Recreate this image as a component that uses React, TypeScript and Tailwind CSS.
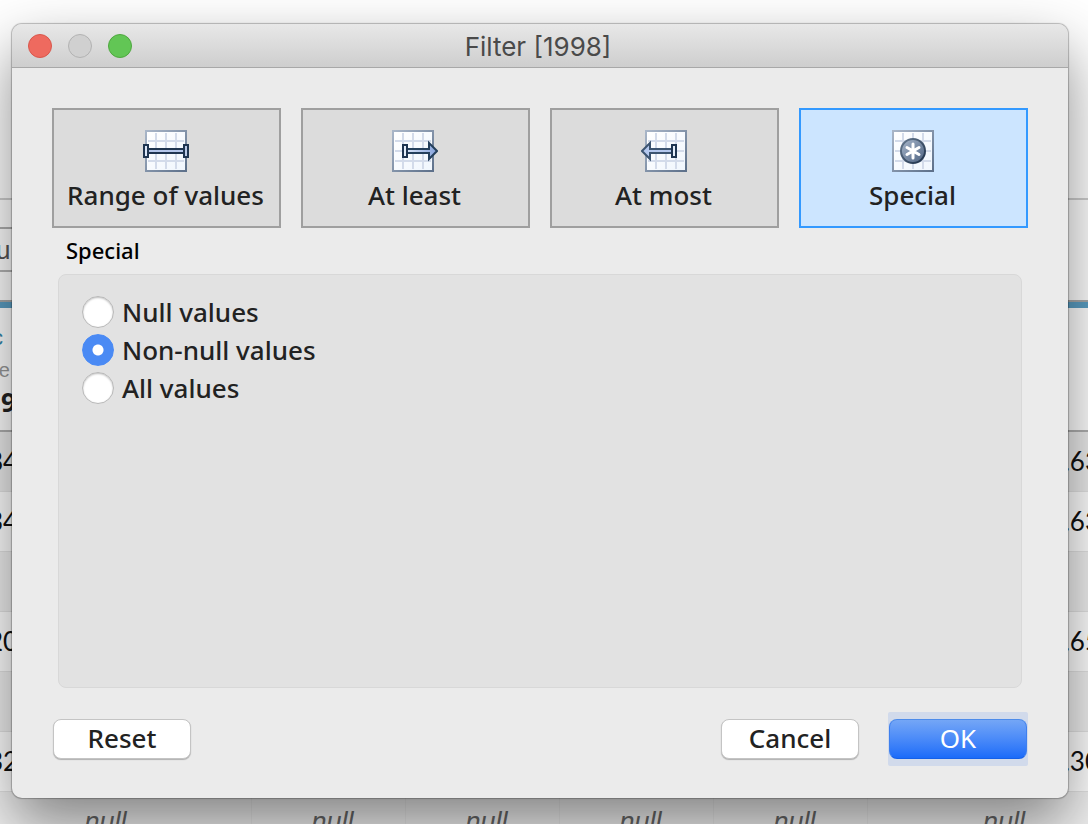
import { useState } from "react";
import type { ReactNode } from "react";

type Mode = "range" | "atLeast" | "atMost" | "special";

function GridPaper({ x, id }: { x: number; id: string }) {
  return (
    <g>
      <defs>
        <linearGradient id={`${id}-edge`} x1="0" y1="0" x2="1" y2="1">
          <stop offset="0" stopColor="#a9b6c8" />
          <stop offset="1" stopColor="#5d708a" />
        </linearGradient>
        <linearGradient id={`${id}-paper`} x1="0" y1="0" x2="1" y2="1">
          <stop offset="0" stopColor="#ffffff" />
          <stop offset="1" stopColor="#f0f6fd" />
        </linearGradient>
        <linearGradient id={`${id}-rod`} x1="0" y1="0" x2="1" y2="0">
          <stop offset="0" stopColor="#dbe6f8" />
          <stop offset="1" stopColor="#86a3dc" />
        </linearGradient>
      </defs>
      <rect x={x + 1} y="1" width="40" height="40" fill={`url(#${id}-paper)`} stroke={`url(#${id}-edge)`} strokeWidth="2" />
      <path
        d={`M${x + 11} 3V39M${x + 21} 3V39M${x + 31} 3V39M${x + 3} 11H${x + 39}M${x + 3} 21H${x + 39}M${x + 3} 31H${x + 39}`}
        stroke="#d3dbea"
        strokeWidth="2"
      />
    </g>
  );
}

function RangeIcon() {
  return (
    <svg width="46" height="42" viewBox="0 0 46 42" aria-hidden="true">
      <GridPaper x={2} id="range" />
      <rect x="5" y="18" width="36" height="6" fill="#1f3550" />
      <rect x="5" y="20" width="36" height="2" fill="#b4c6ea" />
      <rect x="1" y="15" width="4" height="12" fill="#dbe6f8" stroke="#1f3550" strokeWidth="2" />
      <rect x="41" y="15" width="4" height="12" fill="#b9c9e6" stroke="#1f3550" strokeWidth="2" />
    </svg>
  );
}

function AtLeastIcon() {
  return (
    <svg width="46" height="42" viewBox="0 0 46 42" aria-hidden="true">
      <GridPaper x={0} id="least" />
      <path d="M14 19H37V13L45 21L37 29V23H14Z" fill="url(#least-rod)" stroke="#25405c" strokeWidth="2" />
      <rect x="11" y="15" width="4" height="12" fill="#e4edf9" stroke="#1f3550" strokeWidth="2" />
    </svg>
  );
}

function AtMostIcon() {
  return (
    <svg width="46" height="42" viewBox="0 0 46 42" aria-hidden="true">
      <GridPaper x={4} id="most" />
      <path d="M32 19H9V13L1 21L9 29V23H32Z" fill="#b4c8ee" stroke="#3c5470" strokeWidth="2" />
      <rect x="31" y="15" width="4" height="12" fill="#e4edf9" stroke="#1f3550" strokeWidth="2" />
    </svg>
  );
}

function SpecialIcon() {
  return (
    <svg width="46" height="42" viewBox="0 0 46 42" aria-hidden="true">
      <GridPaper x={2} id="special" />
      <defs>
        <linearGradient id="disc" x1="0" y1="0" x2="1" y2="1">
          <stop offset="0" stopColor="#a9b8cc" />
          <stop offset="1" stopColor="#4c6180" />
        </linearGradient>
        <linearGradient id="disc-edge" x1="0" y1="0" x2="1" y2="1">
          <stop offset="0" stopColor="#66798f" />
          <stop offset="1" stopColor="#1c2f48" />
        </linearGradient>
      </defs>
      <circle cx="23" cy="21" r="12" fill="url(#disc)" stroke="url(#disc-edge)" strokeWidth="2" />
      <path d="M23 14V28M17 17.5L29 24.5M29 17.5L17 24.5" stroke="#ffffff" strokeWidth="3" strokeLinecap="round" />
    </svg>
  );
}

const modes: { id: Mode; label: string; icon: ReactNode }[] = [
  { id: "range", label: "Range of values", icon: <RangeIcon /> },
  { id: "atLeast", label: "At least", icon: <AtLeastIcon /> },
  { id: "atMost", label: "At most", icon: <AtMostIcon /> },
  { id: "special", label: "Special", icon: <SpecialIcon /> },
];

const options = ["Null values", "Non-null values", "All values"];

const rows = [
  { first: "84", last: "0.63" },
  { first: "34", last: "0.63" },
  { first: "", last: "" },
  { first: "20", last: "0.65" },
  { first: "", last: "" },
  { first: "32", last: "0.30" },
];

function DataSheet() {
  return (
    <div className="flex flex-col font-['Lato',sans-serif] text-[26px] text-[#111]">
      <div className="box-content h-[198px] border-b-2 border-[#cfcfcf]" />
      <div className="box-content h-[27px] w-[500px] border-b-2 border-[#b0b0b0]" />
      <div className="box-content flex h-[41px] w-[500px] items-center border-b-2 border-[#b5b5b5]">
        <span className="-ml-1 pt-[2px] font-['Liberation_Sans',sans-serif] text-[26px] text-[#555]">u</span>
      </div>
      <div className="h-7" />
      <div className="h-2 border-t-2 border-[#aaa] bg-[#5b9fc4]" />
      <div className="flex h-[124px] flex-col border-b-2 border-[#b0b0b0] pt-[14px]">
        <span className="-ml-2 font-['Liberation_Sans',sans-serif] text-[22px] leading-8 text-[#2f85a8]">c</span>
        <span className="-ml-2 font-['Liberation_Sans',sans-serif] text-[20px] leading-8 text-[#999]">re</span>
        <span className="ml-px font-['Noto_Sans',sans-serif] text-[26px] leading-8 font-bold text-[#222]">98</span>
      </div>
      {rows.map((row, i) => (
        <div
          key={i}
          className={`flex h-[60px] items-center justify-between border-b border-[#e4e4e4] ${
            i === 0 ? "bg-[#ececec]" : row.first === "" ? "bg-[#f0f0f0]" : "bg-white"
          }`}
        >
          <span className="-ml-3">{row.first}</span>
          <span className="-mr-3">{row.last}</span>
        </div>
      ))}
      <div className="-ml-12 flex h-[60px] w-[1200px] bg-[#f0f0f0] font-['Liberation_Sans',sans-serif] text-[27px] text-[#666] italic">
        <span className="flex w-[300px] items-center justify-center border-r border-[#e8e8e8] pl-2">null</span>
        {[0, 1, 2, 3].map((n) => (
          <span key={n} className="flex w-[154px] items-center justify-center border-r border-[#e8e8e8] pl-2">
            null
          </span>
        ))}
        <span className="flex w-[272px] items-center justify-center">null</span>
      </div>
    </div>
  );
}

export default function App() {
  const [mode, setMode] = useState<Mode>("special");
  const [choice, setChoice] = useState(1);

  return (
    <main className="relative h-screen overflow-hidden bg-white">
      <DataSheet />
      <section
        role="dialog"
        aria-labelledby="dialog-title"
        className="absolute top-6 right-5 left-3 overflow-hidden rounded-[10px] bg-[#ebebeb] font-['Noto_Sans',sans-serif] text-[26px] font-medium text-[#222] shadow-[0_0_1px_1px_rgba(0,0,0,0.25),0_26px_60px_rgba(0,0,0,0.46)]"
      >
        <header className="grid h-11 grid-cols-[1fr_auto_1fr] items-center border-b border-[#a8a8a8] bg-linear-to-b from-[#e8e8e8] to-[#cecece] px-4">
          <div className="flex gap-4">
            <button aria-label="Close" className="size-6 rounded-full border border-[#d8574c] bg-[#ee6a5f]" />
            <button aria-label="Minimize" className="size-6 rounded-full border border-[#b2b2b2] bg-[#d0d0d0]" />
            <button aria-label="Zoom" className="size-6 rounded-full border border-[#4fa73f] bg-[#62c655]" />
          </div>
          <h1 id="dialog-title" className="pt-[2px] pr-1 font-['Inter',sans-serif] text-[26px] leading-8 font-normal text-[#4a4a4a]">
            Filter [1998]
          </h1>
        </header>

        <div className="px-10 pt-10 pb-8">
          <div className="grid grid-cols-4 gap-5">
            {modes.map((m) => (
              <button
                key={m.id}
                aria-pressed={mode === m.id}
                onClick={() => setMode(m.id)}
                className={`flex h-[120px] flex-col items-center border-2 pt-5 pr-[2px] whitespace-nowrap ${
                  mode === m.id ? "border-[#3399ff] bg-[#cce5ff]" : "border-[#9f9f9f] bg-[#dcdcdc]"
                }`}
              >
                {m.icon}
                <span className="mt-1 leading-[38px]">{m.label}</span>
              </button>
            ))}
          </div>

          <fieldset>
            <legend className="px-[14px] pt-[5px] pb-[7px] text-[22px] leading-[34px] text-black">Special</legend>
            <div className="mx-[6px] flex h-[414px] flex-col gap-[6px] rounded-lg border border-[#d8d8d8] bg-[#e2e2e2] px-[23px] pt-[21px]">
              {options.map((label, i) => (
                <label key={label} className="flex h-8 items-center gap-2 self-start">
                  <input
                    type="radio"
                    name="special"
                    checked={choice === i}
                    onChange={() => setChoice(i)}
                    className="size-8 appearance-none rounded-full border border-[#b8b8b8] bg-white shadow-[inset_0_1px_2px_rgba(0,0,0,0.25)] checked:border-[#4a8af4] checked:bg-[radial-gradient(circle,#fff_5px,#4a8af4_6px)] checked:shadow-none"
                  />
                  <span>{label}</span>
                </label>
              ))}
            </div>
          </fieldset>

          <div className="mt-6 flex items-center">
            <button className="my-[7px] ml-px h-10 w-[138px] rounded-lg border border-[#c4c4c4] bg-white pb-[2px] leading-9 shadow-[0_1px_1px_rgba(0,0,0,0.25)]">
              Reset
            </button>
            <button className="mr-[29px] ml-auto h-10 w-[138px] rounded-lg border border-[#c4c4c4] bg-white pb-[2px] leading-9 shadow-[0_1px_1px_rgba(0,0,0,0.25)]">
              Cancel
            </button>
            <div className="rounded-xs bg-[#d1daeb] px-px py-[7px]">
              <button className="block h-10 w-[138px] rounded-lg border border-x-[#3f80ee] border-t-[#4c8bea] border-b-[#1560e8] bg-linear-to-b from-[#74a6f6] to-[#1a6bf9] pb-[2px] leading-9 font-normal text-white">
                OK
              </button>
            </div>
          </div>
        </div>
      </section>
    </main>
  );
}
